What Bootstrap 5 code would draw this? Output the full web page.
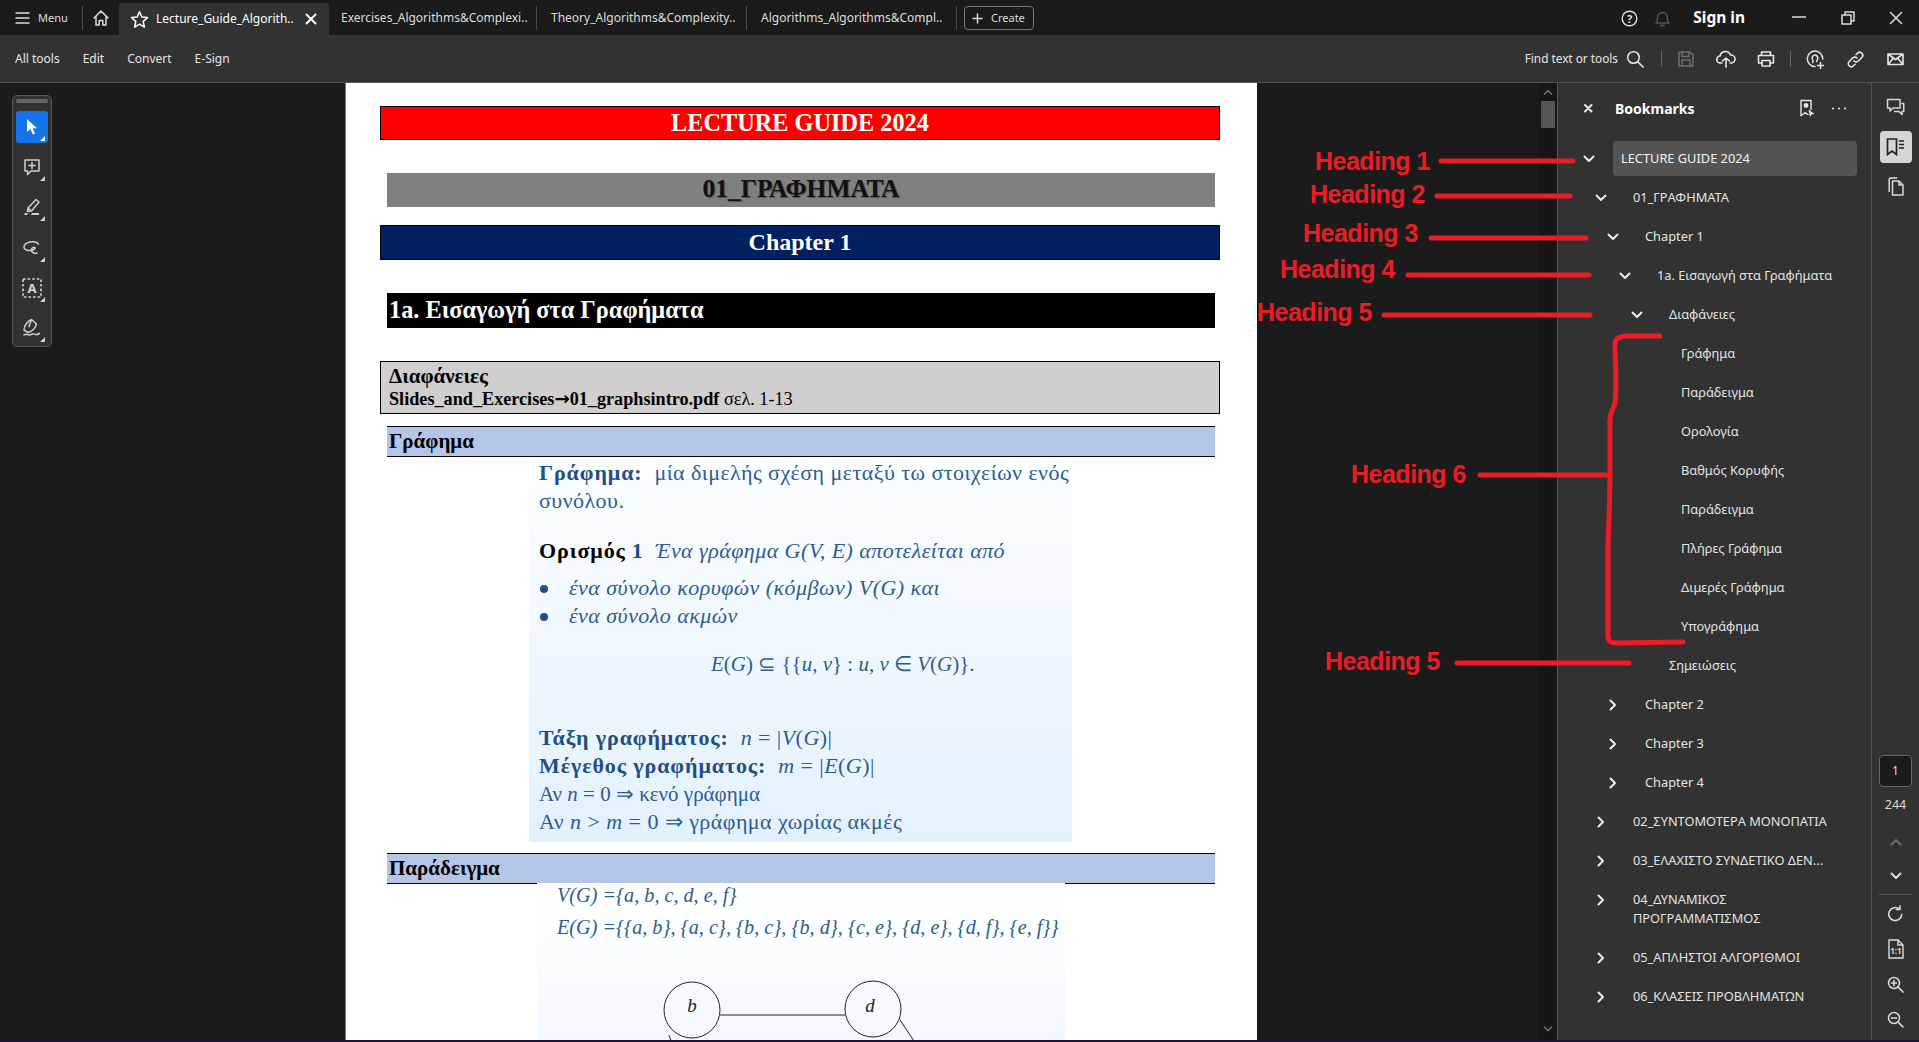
<!DOCTYPE html>
<html lang="el">
<head>
    <meta charset="UTF-8">
    <meta name="viewport" content="width=device-width, initial-scale=1.0">
    <title>Lecture Guide - Bookmarks</title>
    <link href="https://cdn.jsdelivr.net/npm/bootstrap@5.3.0/dist/css/bootstrap.min.css" rel="stylesheet">
    <style>
        html, body { height: 100%; }
        body { background: #1b1b1b; color: #e6e6e6; font-family: "Noto Sans", "Open Sans", sans-serif; overflow: hidden; }
        svg { display: block; flex-shrink: 0; }
        .ico { fill: none; stroke: currentColor; stroke-width: 1.5; stroke-linecap: round; stroke-linejoin: round; }
        .app-shell { height: 1042px; position: relative; }

        /* tabs */
        .tabs-bar { height: 35px; background: #1b1b1b; font-size: 12px; color: #dcdcdc; padding-top: 1px; }
        .tab-menu { width: 83px; height: 24px; padding-left: 15px; border-right: 1px solid #4a4a4a; font-size: 11px; gap: 8px; }
        .tab-home { width: 36px; }
        .tab-item { width: 210px; height: 24px; padding-left: 14px; border-right: 1px solid #4a4a4a; white-space: nowrap; overflow: hidden; }
        .tab-item.tab-first { width: 208px; padding-left: 12px; }
        .tab-active { width: 210px; height: 32px; align-self: flex-end; background: #323232; border-radius: 4px 4px 0 0; padding-left: 11px; color: #fff; }
        .tab-title { margin-left: 7px; width: 149px; white-space: nowrap; }
        .create-btn { width: 70px; height: 24px; margin-left: 7px; border: 1px solid #777; border-radius: 4px; font-size: 11px; gap: 8px; padding-left: 7px; }
        .win-cell { width: 49px; }
        .win-close { width: 47px; }
        .help-cell { width: 24px; }
        .bell-cell { width: 24px; margin-left: 9px; color: #555; }
        .signin-txt { font-size: 15.5px; font-weight: 700; color: #fff; margin: 0 29px 0 19px; }

        /* toolbar */
        .tool-bar { height: 48px; background: #323232; border-bottom: 1px solid #545454; font-size: 12px; padding: 1px 4px 0 15px; color: #e6e6e6; }
        .tool-bar .menu-link { margin-right: 23px; }
        .find-txt { font-size: 11.8px; margin-right: 8px; white-space: nowrap; }
        .tool-cell { width: 40px; }
        .tool-sep { width: 1px; height: 16px; background: #666; }
        .sep-a { margin: 0 4px 0 17px; }
        .sep-b { margin: 0 4px 0 4px; }
        .icon-dim { color: #6d6d6d; }

        /* canvas */
        .work-area { height: 957px; }
        .doc-canvas { width: 1539px; background: #1b1b1b; position: relative; overflow: hidden; }
        .float-tools { position: absolute; left: 12px; top: 12px; width: 40px; height: 252px; background: #323232; border: 1px solid #555; border-radius: 5px; padding: 3px 3px; }
        .grip-bar { height: 4px; background: #666; border-radius: 2px; margin-bottom: 8px; width: 32px; flex-shrink: 0; }
        .float-btn { width: 32px; height: 32px; margin-bottom: 8.2px; flex-shrink: 0; border-radius: 3px; color: #cfcfcf; position: relative; }
        .float-btn::after { content: ""; position: absolute; right: 3px; bottom: 2px; border-left: 5px solid transparent; border-bottom: 5px solid #cfcfcf; }
        .float-on { background: #1473e6; color: #fff; }
        .float-on::after { border-bottom-color: #fff; }

        .doc-page { width: 912px; margin-left: 345px; height: 100%; background: #fff; border-left: 1px solid #777; padding: 23px 42px 0 41px; color: #000; font-family: "Liberation Serif", "Times New Roman", serif; overflow: hidden; }
        .sheet-bar { font-weight: 700; font-size: 24px; line-height: 1; display: flex; align-items: center; }
        .bar-red { height: 34px; background: #f00; color: #fff; justify-content: center; border: 1px solid #000; margin: 0 -5px 33px -7px; font-size: 24.3px; }
        .bar-gray { height: 34px; background: #808080; color: #111; justify-content: center; margin-bottom: 18px; padding-bottom: 2px; text-shadow: 1px 1px 1px #555; font-size: 25.5px; }
        .bar-navy { height: 35px; background: #002060; color: #fff; justify-content: center; border: 1px solid #000; margin: 0 -5px 33px -7px; padding-bottom: 2px; }
        .bar-black { height: 35px; background: #000; color: #fff; padding-left: 2px; margin-bottom: 33px; font-size: 24.3px; }
        .note-box { height: 53px; background: #d0cece; border: 1px solid #000; margin: 0 -5px 12px -7px; padding: 2px 8px; font-weight: 700; }
        .note-head { font-size: 21px; line-height: 24px; }
        .note-sub { font-size: 18.2px; line-height: 21px; }
        .note-sub span { font-weight: 400; }
        .note-sub .note-arrow { font-family: "DejaVu Sans", sans-serif; font-weight: 700; }
        .bar-blue { height: 31px; background: #b4c6e7; border-top: 1px solid #000; border-bottom: 1px solid #000; font-size: 21px; padding-left: 2px; }
        .slide-one { width: 543px; height: 383px; margin-left: 142px; background: linear-gradient(#fcfeff, #e3f1fd); color: #2c5c92; font-size: 22px; letter-spacing: .45px; padding: 0 10px; margin-bottom: 11px; }
        .slide-two { width: 528px; height: 174px; margin-left: 150px; margin-top: -1px; position: relative; background: linear-gradient(#fff, #f1f8fe); color: #2c5c92; font-size: 20.2px; }
        .sl-line { height: 28px; line-height: 28px; white-space: nowrap; }
        .sl-strong { font-weight: 700; color: #1f4e85; letter-spacing: .9px; }
        .sl-black { font-weight: 700; color: #000; letter-spacing: .9px; }
        .sl-it { font-style: italic; }
        .sl-def { margin-top: 22px; }
        .sl-first { margin-top: 2px; }
        .sl-blt { margin-top: 9px; }
        .sl-dot { display: inline-block; width: 30px; }
        .sl-dot::before { content: ""; display: inline-block; width: 8px; height: 8px; border-radius: 50%; background: #1f4e85; margin: 0 0 2px 1px; }
        .sl-center { margin-top: 20px; padding-left: 172px; font-size: 21px; letter-spacing: 0; }
        .sl-ta { margin-top: 46px; }
        .sl-plain { font-size: 21px; letter-spacing: 0; }
        .sl-two-a { padding-left: 20px; font-style: italic; height: 30px; line-height: 24px; margin-bottom: 2px; white-space: nowrap; }

        /* side scroll */
        .scroll-col { width: 18px; background: #161616; border-right: 1px solid #555; box-sizing: content-box; }
        .scroll-thumb { width: 14px; height: 27px; margin: 0 auto; background: #555; }

        /* bookmarks */
        .bm-panel { width: 314px; background: #323232; border-right: 1px solid #555; }
        .bm-head { height: 58px; padding: 0 0 8px 23px; }
        .bm-close { width: 34px; }
        .bm-title { font-size: 14px; font-weight: 700; color: #fff; width: 184px; }
        .bm-tree { gap: 4px; font-size: 12.8px; color: #e2e2e2; }
        .bm-row { height: 35px; padding-right: 14px; }
        .bm-tall { height: 54px; }
        .bm-tall .bm-arrow { height: 35px; }
        .bm-tall .bm-label { align-self: flex-start; padding-top: 8px; }
        .bm-arrow { width: 32px; height: 100%; padding-right: 16px; flex-shrink: 0; color: #eee; align-self: flex-start; }
        .bm-label { padding-left: 8px; line-height: 19px; flex: 1; min-width: 0; }
        .bm-selected { background: #545454; border-radius: 4px; height: 35px; color: #f2f2f2; }
        .lv0 { padding-left: 23px; }
        .lv1 { padding-left: 35px; }
        .lv2 { padding-left: 47px; }
        .lv3 { padding-left: 59px; }
        .lv4 { padding-left: 71px; }
        .lv5 { padding-left: 83px; }

        /* right rail */
        .side-rail { width: 47px; background: #323232; color: #d9d9d9; padding-top: 8px; }
        .rail-cell { height: 32px; width: 32px; margin-bottom: 7.5px; border-radius: 4px; flex-shrink: 0; }
        .rail-on { background: #d6d6d6; color: #222; }
        .page-box { width: 33px; height: 32px; background: #1b1b1b; border: 1px solid #666; border-radius: 4px; font-size: 12px; margin-top: 545px; flex-shrink: 0; }
        .page-total { height: 38px; font-size: 12.5px; flex-shrink: 0; }
        .rail-small { height: 34px; flex-shrink: 0; }
        .rail-sep { width: 33px; height: 1px; background: #5b5b5b; margin: 1px 0 1px; flex-shrink: 0; }
        .rail-tool { height: 35.5px; flex-shrink: 0; }
        .rail-dim { color: #6a6a6a; }

        .os-strip { height: 2px; background: #1d1530; }
        .note-layer { position: absolute; left: 0; top: 0; pointer-events: none; }
        .note-layer path { fill: none; stroke: #ed1c24; stroke-width: 5; stroke-linecap: round; stroke-linejoin: round; }
        .note-layer text { fill: #ed1c24; font-family: "Liberation Sans", Arial, sans-serif; font-weight: 700; font-size: 25px; letter-spacing: -.5px; }
    </style>
</head>
<body>
<div class="app-shell d-flex flex-column">

    <div class="tabs-bar d-flex align-items-center">
        <div class="tab-menu d-flex align-items-center">
            <svg class="ico" width="15" height="14" viewBox="0 0 15 14"><path d="M1 2h13M1 7h13M1 12h13"/></svg>
            <span>Menu</span>
        </div>
        <div class="tab-home d-flex justify-content-center">
            <svg class="ico" width="18" height="18" viewBox="0 0 18 18"><path d="M2 9 9 2l7 7M4 7.500V16h3.200v-4.500h3.600V16H14V7.500"/></svg>
        </div>
        <div class="tab-active d-flex align-items-center">
            <svg class="ico" width="19" height="19" viewBox="0 0 19 19"><path d="M9.500 1.800 11.800 7l5.700.6-4.300 3.800 1.200 5.700-4.900-2.900-4.900 2.900 1.200-5.700L1.500 7.600 7.200 7z"/></svg>
            <span class="tab-title">Lecture_Guide_Algorith..</span>
            <svg class="ico" width="12" height="12" viewBox="0 0 12 12"><path stroke-width="2" d="M1.500 1.500l9 9M10.500 1.500l-9 9"/></svg>
        </div>
        <div class="tab-item tab-first d-flex align-items-center">Exercises_Algorithms&amp;Complexi..</div>
        <div class="tab-item d-flex align-items-center">Theory_Algorithms&amp;Complexity..</div>
        <div class="tab-item d-flex align-items-center">Algorithms_Algorithms&amp;Compl..</div>
        <div class="create-btn d-flex align-items-center">
            <svg class="ico" width="11" height="11" viewBox="0 0 11 11"><path d="M5.500 1v9M1 5.500h9"/></svg>
            <span>Create</span>
        </div>
        <div class="ms-auto d-flex align-items-center">
            <div class="help-cell d-flex justify-content-center">
                <svg width="17" height="17" viewBox="0 0 17 17"><circle cx="8.500" cy="8.500" r="7.300" fill="none" stroke="#ddd" stroke-width="1.400"/><text x="8.500" y="12.500" text-anchor="middle" font-size="11" font-weight="700" fill="#ddd">?</text></svg>
            </div>
            <div class="bell-cell d-flex justify-content-center">
                <svg class="ico" width="17" height="18" viewBox="0 0 17 18"><path d="M2 14c1.300-1 1.600-2.500 1.600-5 0-3.200 2-5.500 4.900-5.500s4.900 2.300 4.900 5.500c0 2.500.3 4 1.600 5zM6.500 16.500h4"/></svg>
            </div>
            <span class="signin-txt">Sign in</span>
            <div class="win-cell d-flex justify-content-center">
                <svg class="ico" width="14" height="14" viewBox="0 0 14 14"><path stroke-linecap="butt" d="M0 6h14"/></svg>
            </div>
            <div class="win-cell d-flex justify-content-center">
                <svg class="ico" width="14" height="14" viewBox="0 0 14 14"><path d="M1 4h9v9H1zM4 4V1h9v9h-3"/></svg>
            </div>
            <div class="win-close d-flex justify-content-center">
                <svg class="ico" width="14" height="14" viewBox="0 0 14 14"><path d="M1.500 1.500l11 11M12.500 1.500l-11 11"/></svg>
            </div>
        </div>
    </div>

    <div class="tool-bar d-flex align-items-center">
        <span class="menu-link">All tools</span>
        <span class="menu-link">Edit</span>
        <span class="menu-link">Convert</span>
        <span class="menu-link">E-Sign</span>
        <div class="ms-auto d-flex align-items-center">
            <span class="find-txt">Find text or tools</span>
            <svg class="ico" width="18" height="18" viewBox="0 0 18 18"><circle cx="7.500" cy="7.500" r="5.800"/><path stroke-width="1.700" d="M12 12l5 5"/></svg>
            <div class="tool-sep sep-a"></div>
            <div class="tool-cell d-flex justify-content-center icon-dim">
                <svg class="ico" width="18" height="18" viewBox="0 0 18 18"><path d="M2 2h11l3 3v11H2zM5 2v4.500h7V2M5 16v-6h8v6"/></svg>
            </div>
            <div class="tool-cell d-flex justify-content-center">
                <svg class="ico" width="20" height="18" viewBox="0 0 20 18"><path stroke-width="1.600" d="M6 13H4.500a3.500 3.500 0 0 1-.5-7 5.500 5.500 0 0 1 10.500-1 4 4 0 0 1 1 8H14M10 17V8M6.500 11 10 8l3.500 3"/></svg>
            </div>
            <div class="tool-cell d-flex justify-content-center">
                <svg class="ico" width="18" height="18" viewBox="0 0 18 18"><path stroke-width="1.600" d="M4.500 5V2h9v3M4 13H1.500V5.500h15V13H14M5 10.500h8V16H5z"/></svg>
            </div>
            <div class="tool-sep sep-b"></div>
            <div class="tool-cell d-flex justify-content-center">
                <svg class="ico" width="19" height="19" viewBox="0 0 19 19"><path stroke-width="1.500" d="M9 16.500a7.700 7.700 0 1 1 7.700-7.500M6.500 12.500c1-1 .5-2-.1-3.500-.7-2 .8-4 2.600-4s3.300 2 2.600 4c-.3 1-.8 1.800-.9 2.500M14.500 12.500v6M11.500 15.500h6"/></svg>
            </div>
            <div class="tool-cell d-flex justify-content-center">
                <svg class="ico" width="17" height="17" viewBox="0 0 17 17"><path stroke-width="1.600" d="M7 10a3 3 0 0 0 4.300 0l3.500-3.500A3 3 0 0 0 10.500 2.200L9 3.700M10 7a3 3 0 0 0-4.300 0L2.200 10.500A3 3 0 0 0 6.500 14.800L8 13.300"/></svg>
            </div>
            <div class="tool-cell d-flex justify-content-center">
                <svg class="ico" width="17" height="14" viewBox="0 0 17 14"><path stroke-width="1.600" d="M1 2h15v10.500H1zM1 2l7.500 5.500L16 2M1 12.500l5.500-6.500M16 12.500 10.500 6"/></svg>
            </div>
        </div>
    </div>

    <div class="work-area d-flex">
        <div class="doc-canvas">
            <div class="doc-page">
                <div class="sheet-bar bar-red">LECTURE GUIDE 2024</div>
                <div class="sheet-bar bar-gray">01_ΓΡΑΦΗΜΑΤΑ</div>
                <div class="sheet-bar bar-navy">Chapter 1</div>
                <div class="sheet-bar bar-black">1a. Εισαγωγή στα Γραφήματα</div>
                <div class="note-box">
                    <div class="note-head">Διαφάνειες</div>
                    <div class="note-sub">Slides_and_Exercises<span class="note-arrow">→</span>01_graphsintro.pdf <span>σελ. 1-13</span></div>
                </div>
                <div class="sheet-bar bar-blue">Γράφημα</div>
                <div class="slide-one">
                    <div class="sl-line sl-first"><span class="sl-strong">Γράφημα:</span>&nbsp; μία διμελής σχέση μεταξύ τω στοιχείων ενός</div>
                    <div class="sl-line">συνόλου.</div>
                    <div class="sl-line sl-def"><span class="sl-black">Ορισμός</span> <span class="sl-strong">1</span> &nbsp;<span class="sl-it">Ένα γράφημα G(V, E) αποτελείται από</span></div>
                    <div class="sl-line sl-blt sl-it"><span class="sl-dot"></span>ένα σύνολο κορυφών (κόμβων) V(G) και</div>
                    <div class="sl-line sl-it"><span class="sl-dot"></span>ένα σύνολο ακμών</div>
                    <div class="sl-line sl-center"><span class="sl-it">E</span>(<span class="sl-it">G</span>) ⊆ {{<span class="sl-it">u, v</span>} : <span class="sl-it">u, v</span> ∈ <span class="sl-it">V</span>(<span class="sl-it">G</span>)}.</div>
                    <div class="sl-line sl-ta"><span class="sl-strong">Τάξη γραφήματος:</span>&nbsp; <span class="sl-it">n</span> = |<span class="sl-it">V</span>(<span class="sl-it">G</span>)|</div>
                    <div class="sl-line"><span class="sl-strong">Μέγεθος γραφήματος:</span>&nbsp; <span class="sl-it">m</span> = |<span class="sl-it">E</span>(<span class="sl-it">G</span>)|</div>
                    <div class="sl-line sl-plain">Αν <span class="sl-it">n</span> = 0 ⇒ κενό γράφημα</div>
                    <div class="sl-line">Αν <span class="sl-it">n</span> &gt; <span class="sl-it">m</span> = 0 ⇒ γράφημα χωρίας ακμές</div>
                </div>
                <div class="sheet-bar bar-blue">Παράδειγμα</div>
                <div class="slide-two">
                    <div class="sl-two-a">V(G) ={a, b, c, d, e, f}</div>
                    <div class="sl-two-a">E(G) ={{a, b}, {a, c}, {b, c}, {b, d}, {c, e}, {d, e}, {d, f}, {e, f}}</div>
                    <svg width="528" height="110" viewBox="0 0 528 110">
                        <circle cx="155" cy="63" r="28" fill="none" stroke="#222"/>
                        <circle cx="336" cy="62" r="28" fill="none" stroke="#222"/>
                        <path d="M183 68H308M363 73 383 103M132 88 136 99" fill="none" stroke="#222"/>
                        <text x="155" y="65" text-anchor="middle" font-size="19" font-style="italic" fill="#222">b</text>
                        <text x="333" y="65" text-anchor="middle" font-size="19" font-style="italic" fill="#222">d</text>
                    </svg>
                </div>
            </div>

            <div class="float-tools d-flex flex-column align-items-center">
                <div class="grip-bar"></div>
                <div class="float-btn float-on d-flex align-items-center justify-content-center">
                    <svg width="16" height="18" viewBox="0 0 16 18"><path d="M3 1v13l3.400-3 2.400 5.500 2.200-1-2.300-5.200H13z" fill="#fff"/></svg>
                </div>
                <div class="float-btn d-flex align-items-center justify-content-center">
                    <svg class="ico" width="18" height="18" viewBox="0 0 18 18"><path d="M2 2h14v11H8l-3.500 3.500V13H2zM9 4.500v6M6 7.500h6"/></svg>
                </div>
                <div class="float-btn d-flex align-items-center justify-content-center">
                    <svg class="ico" width="20" height="20" viewBox="0 0 20 20"><path d="M6 11 14 2.500l3 2.500-7.500 9zM6 11l-.6 3.500 4.100-.5"/><path d="M2 18h3l1-2H3zM9 18h8v-2H10z" fill="currentColor" stroke="none"/></svg>
                </div>
                <div class="float-btn d-flex align-items-center justify-content-center">
                    <svg class="ico" width="20" height="16" viewBox="0 0 20 16"><path d="M16.500 4C15 2 12 1.500 8.500 2 4.500 2.500 1.500 4.500 2 7.500 2.500 10.500 7 11 10.500 10c2-.6 3-1.500 2.500-2.300C12 6.500 9 8 9.500 10.500 10 13 13 14 15 13"/></svg>
                </div>
                <div class="float-btn d-flex align-items-center justify-content-center">
                    <svg width="20" height="20" viewBox="0 0 20 20"><rect x="1" y="1" width="18" height="18" fill="none" stroke="#d5d5d5" stroke-width="1.600" stroke-dasharray="2.600 2"/><text x="10" y="15" text-anchor="middle" font-size="13" font-weight="700" fill="#d5d5d5">A</text></svg>
                </div>
                <div class="float-btn d-flex align-items-center justify-content-center">
                    <svg class="ico" width="20" height="19" viewBox="0 0 20 19"><path d="M2 12C2 7 6 3 9.500 1.500l5 4.500C13.500 10 10 14 6 14.500zM7 8.500 9.500 1.500M2 17c3-1.500 4-.5 5.500 0s2.500-2 4-1 3 1 6-.5"/></svg>
                </div>
            </div>
        </div>

        <div class="scroll-col d-flex flex-column align-items-center justify-content-between">
            <div class="w-100">
                <div class="d-flex justify-content-center">
                    <svg class="ico icon-dim" width="10" height="18" viewBox="0 0 10 18"><path stroke-width="1.600" d="M1.500 11 5 7.500 8.500 11"/></svg>
                </div>
                <div class="scroll-thumb"></div>
            </div>
            <svg class="ico icon-dim" width="10" height="18" viewBox="0 0 10 18"><path stroke-width="1.600" d="M1.500 5 5 8.500 8.500 5"/></svg>
        </div>

        <div class="bm-panel d-flex flex-column">
            <div class="bm-head d-flex align-items-center">
                <div class="bm-close">
                    <svg class="ico" width="14" height="14" viewBox="0 0 14 14"><path stroke-width="2" d="M4 4l6.500 6.500M10.500 4 4 10.500"/></svg>
                </div>
                <span class="bm-title">Bookmarks</span>
                <svg class="ico" width="16" height="19" viewBox="0 0 16 19"><path stroke-width="1.400" d="M9 15.500l-3-1.800-4 3V1.500h10v9"/><circle cx="7" cy="6.500" r="2.400" fill="currentColor" stroke="none"/><path fill="currentColor" stroke="none" d="M9.500 10.500 15.500 15l-3 .5-1.500 2.500z"/></svg>
                <svg class="ms-3" width="16" height="19" viewBox="0 0 16 19"><circle cx="2" cy="9.500" r="1.100" fill="#ddd"/><circle cx="8" cy="9.500" r="1.100" fill="#ddd"/><circle cx="14" cy="9.500" r="1.100" fill="#ddd"/></svg>
            </div>
            <div class="bm-tree d-flex flex-column" id="tree"></div>
        </div>

        <div class="side-rail d-flex flex-column align-items-center">
            <div class="rail-cell d-flex align-items-center justify-content-center">
                <svg class="ico" width="19" height="18" viewBox="0 0 19 18"><path d="M1.500 1.500h12.500v8.500H7l-3 3v-3H1.500zM16 5.500h1.700v8H16v3l-3-3H8.500"/></svg>
            </div>
            <div class="rail-cell rail-on d-flex align-items-center justify-content-center">
                <svg width="20" height="18" viewBox="0 0 20 18"><path d="M1.500 1h9v15.500l-4.500-3.500-4.500 3.500z" fill="none" stroke="#222" stroke-width="1.700"/><path d="M13 3h5M13 6.500h5M13 10h5" stroke="#222" stroke-width="1.300"/></svg>
            </div>
            <div class="rail-cell d-flex align-items-center justify-content-center">
                <svg class="ico" width="16" height="19" viewBox="0 0 16 19"><path d="M1.200 14.500V2.500a1.500 1.500 0 0 1 1.500-1.500h6"/><path d="M4.500 4H11l4 4v10H4.500zM11 4v4h4"/></svg>
            </div>
            <div class="page-box d-flex align-items-center justify-content-center">1</div>
            <div class="page-total d-flex align-items-center">244</div>
            <div class="rail-small d-flex align-items-center rail-dim">
                <svg class="ico" width="12" height="8" viewBox="0 0 12 8"><path stroke-width="2" d="M1.500 6.500 6 2l4.500 4.500"/></svg>
            </div>
            <div class="rail-small d-flex align-items-center">
                <svg class="ico" width="12" height="8" viewBox="0 0 12 8"><path stroke-width="2" d="M1.500 1.500 6 6l4.500-4.500"/></svg>
            </div>
            <div class="rail-sep"></div>
            <div class="rail-tool d-flex align-items-center">
                <svg class="ico" width="17" height="17" viewBox="0 0 17 17"><path stroke-width="1.600" d="M14.700 9.500a6.500 6.500 0 1 1-2.300-5.400M13 .8v3.700H9.300"/></svg>
            </div>
            <div class="rail-tool d-flex align-items-center">
                <svg width="16" height="20" viewBox="0 0 16 20"><path d="M1 1h9l5 5v13H1zM10 1v5h5" fill="none" stroke="#d9d9d9" stroke-width="1.400"/><text x="8" y="15" text-anchor="middle" font-size="8" font-weight="700" fill="#d9d9d9">1:1</text></svg>
            </div>
            <div class="rail-tool d-flex align-items-center">
                <svg class="ico" width="17" height="17" viewBox="0 0 17 17"><circle cx="7" cy="7" r="5.500"/><path stroke-width="1.700" d="M11 11l5 5M7 4.500v5M4.500 7h5"/></svg>
            </div>
            <div class="rail-tool d-flex align-items-center">
                <svg class="ico" width="17" height="17" viewBox="0 0 17 17"><circle cx="7" cy="7" r="5.500"/><path stroke-width="1.700" d="M11 11l5 5M4.500 7h5"/></svg>
            </div>
        </div>
    </div>

    <div class="os-strip"></div>

    <svg class="note-layer" width="1919" height="1042" viewBox="0 0 1919 1042">
        <text x="1315" y="170">Heading 1</text>
        <text x="1310" y="203">Heading 2</text>
        <text x="1303" y="242">Heading 3</text>
        <text x="1280" y="278">Heading 4</text>
        <text x="1257" y="321">Heading 5</text>
        <text x="1351" y="483">Heading 6</text>
        <text x="1325" y="670">Heading 5</text>
        <path d="M1441 161H1573"/>
        <path d="M1437 196H1570"/>
        <path d="M1431 238H1586"/>
        <path d="M1408 275H1589"/>
        <path d="M1384 315H1590"/>
        <path d="M1480 475H1606"/>
        <path d="M1457 663H1629"/>
        <path d="M1660 336H1625C1618 337 1615 339 1615 343C1615 360 1617 380 1615 403C1613 410 1610 412 1610 420V470C1610 500 1609 520 1608 545V635C1608 642 1611 643 1616 643L1683 642"/>
    </svg>
</div>

<script>
    // arbol de marcadores: [nivel, texto, estado, activo, alto]
    const marcadores = [
        [0, 'LECTURE GUIDE 2024', 'open', true],
        [1, '01_ΓΡΑΦΗΜΑΤΑ', 'open'],
        [2, 'Chapter 1', 'open'],
        [3, '1a. Εισαγωγή στα Γραφήματα', 'open'],
        [4, 'Διαφάνειες', 'open'],
        [5, 'Γράφημα'], [5, 'Παράδειγμα'], [5, 'Ορολογία'], [5, 'Βαθμός Κορυφής'],
        [5, 'Παράδειγμα'], [5, 'Πλήρες Γράφημα'], [5, 'Διμερές Γράφημα'], [5, 'Υπογράφημα'],
        [4, 'Σημειώσεις'],
        [2, 'Chapter 2', 'closed'], [2, 'Chapter 3', 'closed'], [2, 'Chapter 4', 'closed'],
        [1, '02_ΣΥΝΤΟΜΟΤΕΡΑ ΜΟΝΟΠΑΤΙΑ', 'closed'],
        [1, '03_ΕΛΑΧΙΣΤΟ ΣΥΝΔΕΤΙΚΟ ΔΕΝ...', 'closed'],
        [1, '04_ΔΥΝΑΜΙΚΟΣ<br>ΠΡΟΓΡΑΜΜΑΤΙΣΜΟΣ', 'closed', false, true],
        [1, '05_ΑΠΛΗΣΤΟΙ ΑΛΓΟΡΙΘΜΟΙ', 'closed'],
        [1, '06_ΚΛΑΣΕΙΣ ΠΡΟΒΛΗΜΑΤΩΝ', 'closed']
    ];
    const abierto = '<svg class="ico" width="12" height="8" viewBox="0 0 12 8"><path stroke-width="2" d="M1.500 1.500 6 6l4.500-4.500"/></svg>';
    const cerrado = '<svg class="ico" width="8" height="12" viewBox="0 0 8 12"><path stroke-width="2" d="M1.500 1.500 6 6l-4.500 4.500"/></svg>';
    document.getElementById('tree').innerHTML = marcadores.map(([nivel, texto, estado, activo, alto]) => {
        const flecha = estado === 'open' ? abierto : estado === 'closed' ? cerrado : '';
        return `<div class="bm-row d-flex align-items-center lv${nivel} ${alto ? 'bm-tall' : ''}">
            <div class="bm-arrow d-flex align-items-center justify-content-center">${flecha}</div>
            <div class="bm-label ${activo ? 'bm-selected d-flex align-items-center' : ''}">${texto}</div>
        </div>`;
    }).join('');
</script>
<script src="https://cdn.jsdelivr.net/npm/bootstrap@5.3.0/dist/js/bootstrap.bundle.min.js"></script>
</body>
</html>
